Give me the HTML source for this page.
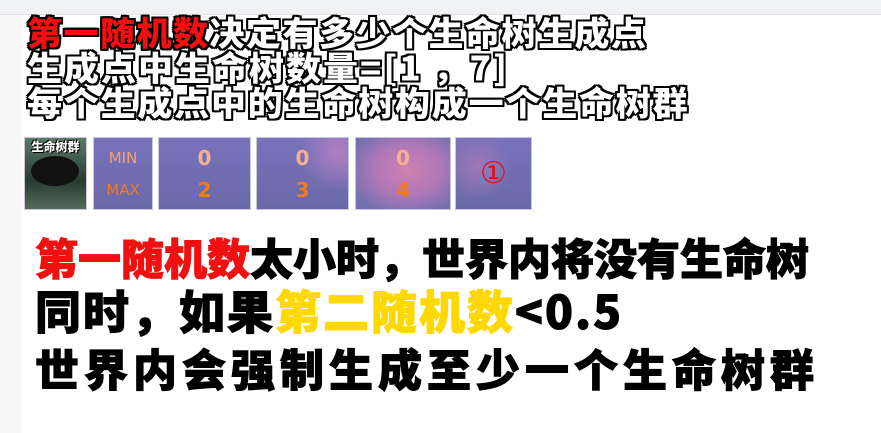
<!DOCTYPE html><html><head><meta charset="utf-8"><style>
body{margin:0;width:881px;height:433px;background:#fff;position:relative;overflow:hidden;font-family:"Liberation Sans","Noto Sans CJK SC",sans-serif}
.top{position:absolute;left:0;top:0;width:881px;height:14px;background:#f1f2f4;border-bottom:1px solid #e4e4e6}
.strip{position:absolute;left:0;top:15px;width:22px;height:418px;background:#f8f8f9}
.o{position:absolute;left:27px;font-weight:900;color:#fff;font-size:35px;line-height:34px;white-space:nowrap;transform:scaleY(.95);transform-origin:0 0;font-family:"Noto Sans CJK SC",sans-serif;
text-shadow:2px 0 #000,-2px 0 #000,0 2px #000,0 -2px #000,2px 2px #000,-2px -2px #000,2px -2px #000,-2px 2px #000}
.r{color:#f01010}
.t{position:absolute;top:137px;height:73px;background:linear-gradient(#7872bc,#6a69a8);border:1px solid #c8c8d8;box-sizing:border-box;color:#f07a20;font-family:"DejaVu Sans",sans-serif;text-align:center}
.b{position:absolute;left:35px;font-weight:900;font-size:43px;line-height:50px;white-space:nowrap;color:#000;font-family:"Noto Sans CJK SC",sans-serif;-webkit-text-stroke:1px currentColor}
</style></head><body>
<div class="top"></div><div class="strip"></div>
<div class="o" style="top:16px;letter-spacing:1.5px"><span class="r">第一随机数</span>决定有多少个生命树生成点</div>
<div class="o" style="top:51px;letter-spacing:2px">生成点中生命树数量=[1 ，7]</div>
<div class="o" style="top:86px;letter-spacing:1.8px">每个生成点中的生命树构成一个生命树群</div>
<div class="t" style="left:24px;width:63px;background:linear-gradient(#5a7a6a,#2a3a30 60%,#506a5a);">
<div style="position:absolute;left:6px;top:18px;width:48px;height:30px;border-radius:50%;background:#111"></div>
<div style="position:relative;color:#fff;font-family:'Noto Sans CJK SC';font-weight:900;font-size:12px;text-shadow:1px 1px #000,-1px -1px #000">生命树群</div></div>
<div class="t" style="left:93px;width:60px;font-size:15px;line-height:32px;padding-top:4px"><div style="color:#f5a070">MIN</div><div>MAX</div></div>
<div class="t" style="left:158px;width:93px;font-size:20px;line-height:32px;padding-top:4px;font-weight:bold"><div style="color:#f5b090">0</div><div>2</div></div>
<div class="t" style="left:256px;width:93px;font-size:20px;line-height:32px;padding-top:4px;font-weight:bold;background:radial-gradient(circle at 90% 20%,#b080c0,transparent 40%),linear-gradient(#7872bc,#6a69a8)"><div style="color:#f5b090">0</div><div>3</div></div>
<div class="t" style="left:355px;width:96px;font-size:20px;line-height:32px;padding-top:4px;font-weight:bold;background:radial-gradient(ellipse at 55% 45%,#d080b0,#b078b8 45%,#7270b0 85%)"><div style="color:#f5b090">0</div><div>4</div></div>
<div class="t" style="left:455px;width:77px;font-size:30px;line-height:71px;color:#e01010;background:radial-gradient(circle at 30% 40%,#a078b8,transparent 50%),linear-gradient(#7872bc,#6a69a8)">①</div>
<div class="b" style="top:232px;letter-spacing:0px"><span style="color:#f01010">第一随机数</span>太小时，世界内将没有生命树</div>
<div class="b" style="top:285px;letter-spacing:2px;font-size:46px">同时，如果<span style="color:#ffd800">第二随机数</span>&lt;0.5</div>
<div class="b" style="top:342px;letter-spacing:5px;font-size:44px">世界内会强制生成至少一个生命树群</div>
</body></html>
